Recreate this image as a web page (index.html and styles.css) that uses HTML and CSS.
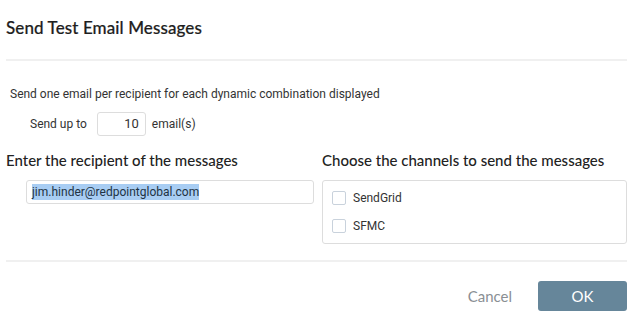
FILE: index.html
```html
<!doctype html>
<html>
<head>
  <meta charset="UTF-8" />
  <title>Send Test Email Messages</title>
  <link rel="stylesheet" href="styles.css">
</head>
<body>
  <div class="dialog">
    <h1 class="title">Send Test Email Messages</h1>
    <hr class="rule" />
    <div class="body">
      <p class="note">Send one email per recipient for each dynamic combination displayed</p>
      <div class="limit">
        <span>Send up to</span>
        <div class="num">10</div>
        <span>email(s)</span>
      </div>
      <div class="cols">
        <div class="col">
          <h2>Enter the recipient of the messages</h2>
          <div class="field"><span class="sel">jim.hinder@redpointglobal.com</span></div>
        </div>
        <div class="col">
          <h2>Choose the channels to send the messages</h2>
          <div class="channels">
            <label class="chk"><span class="box"></span>SendGrid</label>
            <label class="chk"><span class="box"></span>SFMC</label>
          </div>
        </div>
      </div>
    </div>
    <hr class="rule bottom" />
    <div class="actions">
      <button class="cancel">Cancel</button>
      <button class="ok">OK</button>
    </div>
  </div>
</body>
</html>
```

FILE: styles.css
```css
html, body {
  margin: 0;
  padding: 0;
  background: #fff;
  font-family: Roboto, sans-serif;
  color: #333;
}
.dialog {
  width: 637px;
  height: 323px;
  padding: 0 10px 0 6px;
  box-sizing: border-box;
}
.title {
  font-family: Lato, sans-serif;
  font-weight: 500;
  font-size: 17px;
  color: #1e1e1e;
  margin: 0;
  padding: 17px 0 0 0;
  height: 59px;
  box-sizing: border-box;
  letter-spacing: 0.1px;
  -webkit-text-stroke: 0.2px #1e1e1e;
}
.rule {
  border: 0;
  border-top: 2px solid #f0f0f0;
  margin: 0;
}
.body {
  padding: 25px 0 0 4px;
}
.note {
  font-size: 12px;
  margin: 0;
  line-height: 16px;
}
.limit {
  display: flex;
  align-items: center;
  gap: 6px;
  font-size: 12px;
  margin: 10px 0 0 20px;
}
.num {
  width: 49px;
  height: 24px;
  box-sizing: border-box;
  border: 1px solid #ddd;
  border-radius: 3px;
  text-align: right;
  padding-right: 6px;
  line-height: 22px;
  font-size: 13px;
  margin-left: 4px;
}
.cols {
  display: flex;
  margin: 15px 0 0 -4px;
  gap: 8px;
}
.col {
  flex: 1;
}
.col + .col {
  flex: 0 0 305px;
}
h2 {
  font-family: Lato, sans-serif;
  font-weight: 500;
  font-size: 15px;
  color: #222;
  margin: 0 0 11px 0;
  line-height: 18px;
}
.field {
  margin-left: 20px;
  height: 24px;
  box-sizing: border-box;
  border: 1px solid #ddd;
  border-radius: 3px;
  font-size: 12px;
  line-height: 22px;
  padding-left: 5px;
}
.sel {
  background: #a8cdf3;
  color: #234;
  padding: 1px 0;
}
.channels {
  border: 1px solid #ddd;
  border-radius: 3px;
  height: 64px;
  box-sizing: border-box;
  padding: 9px 0 0 9px;
  display: flex;
  flex-direction: column;
  gap: 12px;
}
.chk {
  display: flex;
  align-items: center;
  gap: 7px;
  font-size: 12px;
  line-height: 16px;
}
.box {
  width: 14px;
  height: 14px;
  box-sizing: border-box;
  border: 1px solid #c9d2dc;
  border-radius: 2px;
}
.bottom {
  margin-top: 16px;
}
.actions {
  display: flex;
  justify-content: flex-end;
  align-items: center;
  gap: 26px;
  padding: 19px 0 0 0;
}
button {
  font-family: Lato, sans-serif;
  font-size: 15px;
  border: 0;
  background: none;
  cursor: pointer;
}
.cancel {
  color: #8a8f94;
  padding: 0;
}
.ok {
  width: 89px;
  height: 30px;
  background: #66869a;
  color: #fff;
  border-radius: 3px;
  font-size: 15px;
}
```
